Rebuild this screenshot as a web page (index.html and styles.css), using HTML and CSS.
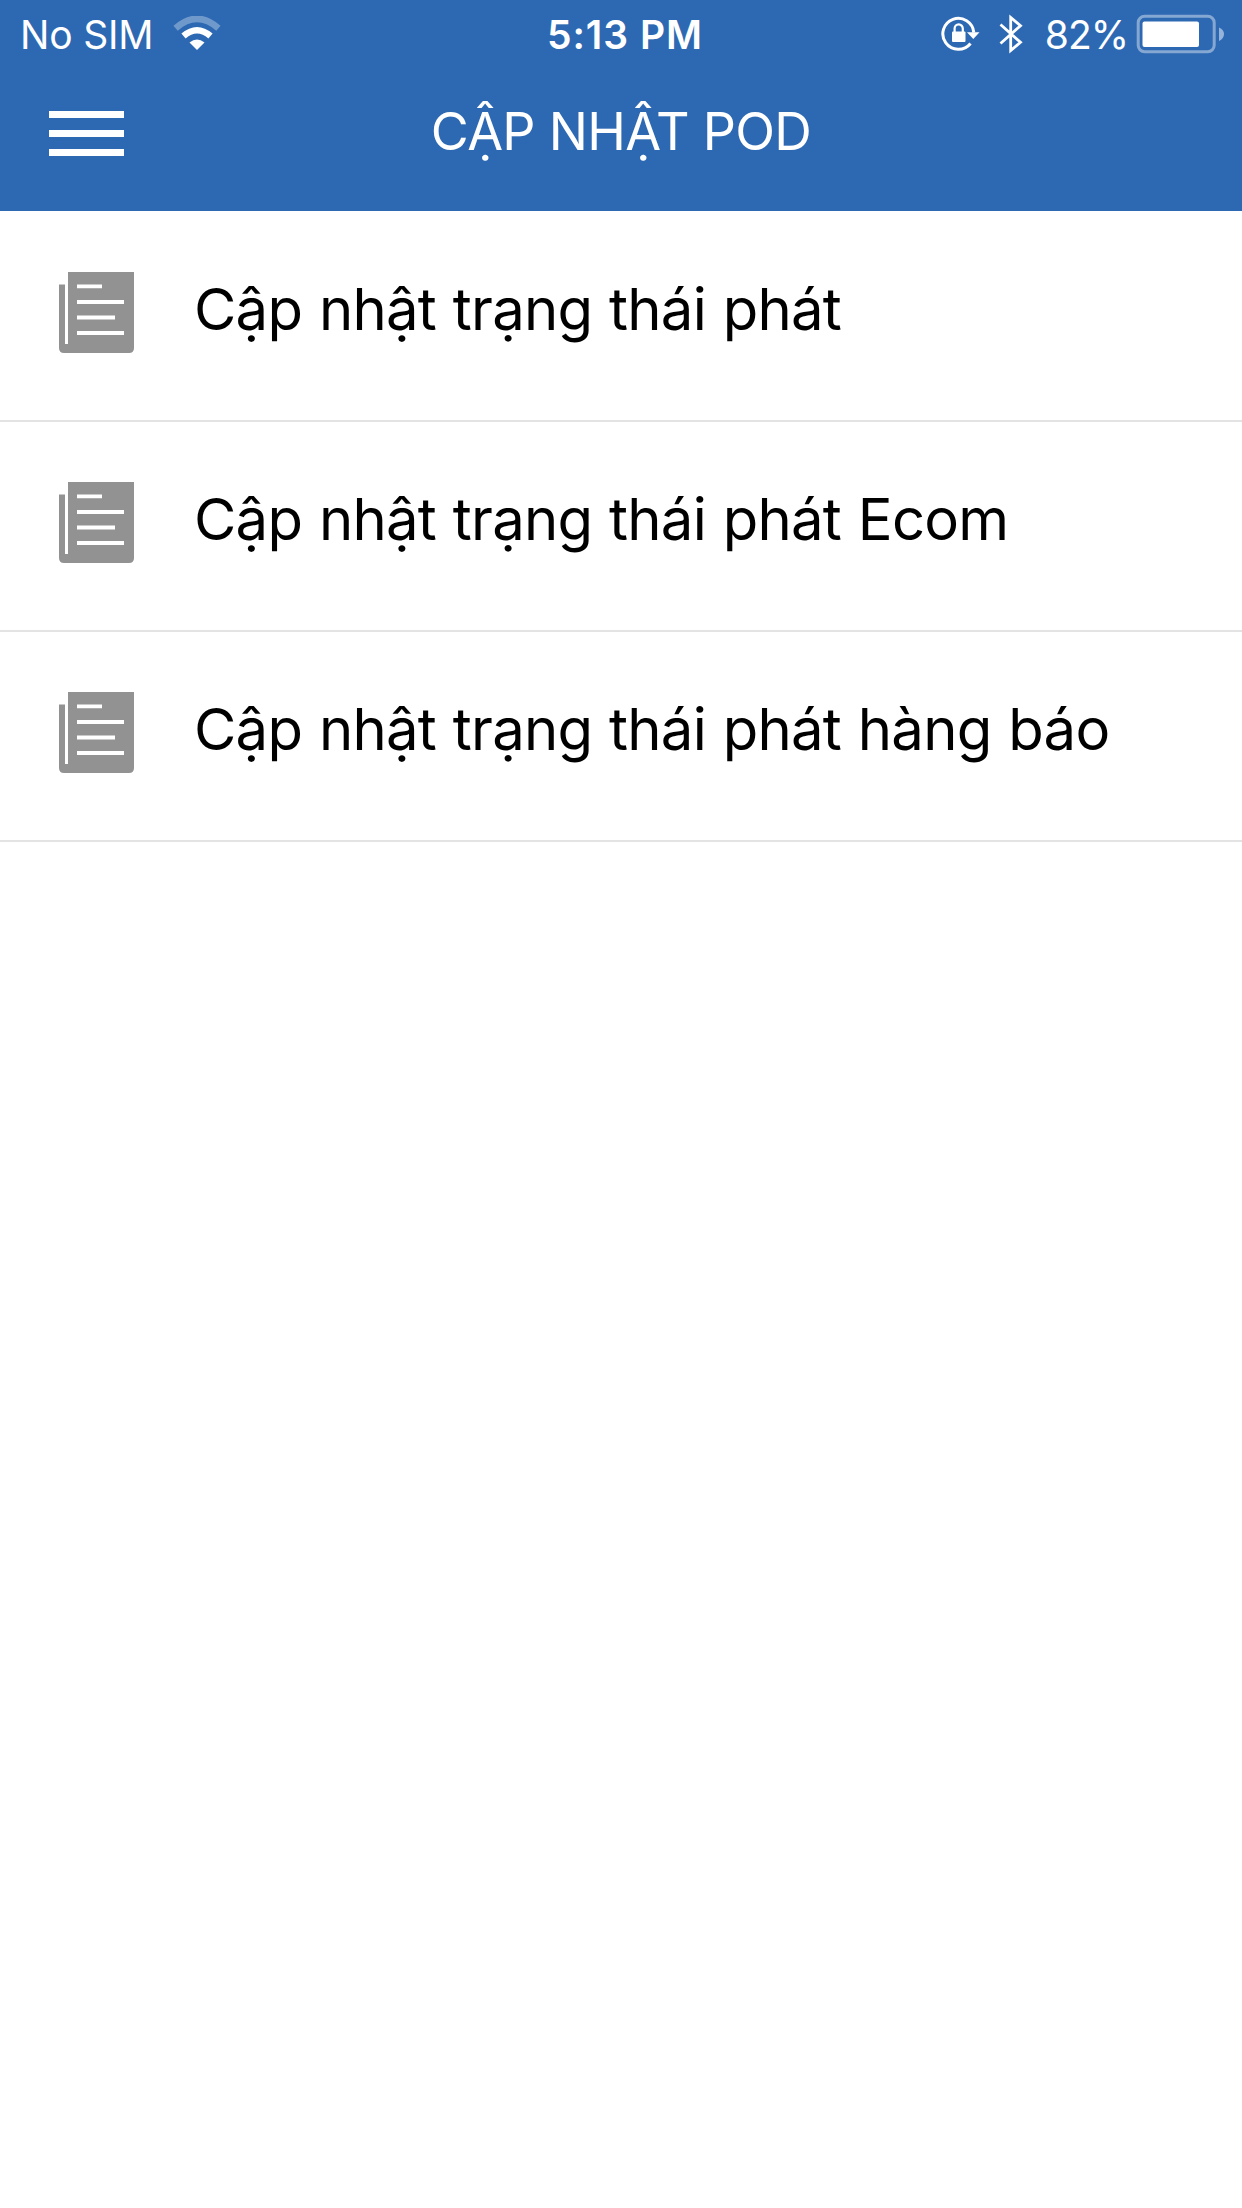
FILE: index.html
```html
<!DOCTYPE html>
<html lang="vi">
<head>
    <meta charset="UTF-8">
    <meta name="viewport" content="width=device-width, initial-scale=1.0">
    <title>Cập nhật POD</title>
    <link rel="stylesheet" href="styles.css">
</head>
<body>
    <svg class="defs" width="0" height="0">
        <symbol id="doc" viewBox="0 0 75 81">
            <path fill="#929292" d="M0 12.5H6V72H9V0H75V76Q75 81 70 81H5Q0 81 0 76Z"/>
            <path fill="none" stroke="#fff" stroke-width="3.8" d="M18 14.3H43M18 30H65M18 45.5H56M18 61H65"/>
        </symbol>
    </svg>

    <header class="header">
        <div class="status">
            <div class="status-left">
                <span class="carrier">No SIM</span>
                <svg class="wifi" width="48" height="36" viewBox="0 0 48 36" fill="none">
                    <path d="M2.6 12.2Q24 -6.5 45.4 12.2" stroke="#fff" stroke-opacity=".32" stroke-width="6.5"/>
                    <path d="M10.5 20Q24 8.5 37.5 20" stroke="#fff" stroke-width="6.5"/>
                    <path d="M16.5 26.5Q24 20.5 31.5 26.5L24 34Z" fill="#fff"/>
                </svg>
            </div>
            <div class="time">5:13 PM</div>
            <div class="status-right">
                <svg class="lock" width="40" height="36" viewBox="0 0 40 36" fill="none">
                    <path d="M29.5 27.5A15.5 15.5 0 1 1 32.8 16.5" stroke="#fff" stroke-width="3"/>
                    <path d="M26 16.2H38.5L32.3 23Z" fill="#fff"/>
                    <rect x="11" y="15.5" width="13.5" height="10.5" rx="1" fill="#fff"/>
                    <path d="M13.6 16V12.5a4.1 4.1 0 0 1 8.2 0V16" stroke="#fff" stroke-width="2.2"/>
                </svg>
                <svg class="bluetooth" width="24" height="40" viewBox="0 0 24 40" fill="none">
                    <path d="M1.5 10.5L21.5 28.3L11.7 36.5V3.5L21.5 11.7L1.5 29.5" stroke="#fff" stroke-width="2.8"/>
                </svg>
                <span class="percent">82%</span>
                <svg class="battery" width="90" height="40" viewBox="0 0 90 40" fill="none">
                    <rect x="2.2" y="2.2" width="76" height="35.6" rx="6.5" stroke="#fff" stroke-opacity=".42" stroke-width="3"/>
                    <rect x="6.5" y="7.5" width="56.5" height="25.5" rx="2" fill="#fff"/>
                    <path d="M83 13.5Q88 15.5 88 20T83 27Z" fill="#fff" fill-opacity=".5"/>
                </svg>
            </div>
        </div>
        <div class="navbar">
            <div class="menu">
                <i></i>
                <i></i>
                <i></i>
            </div>
            <h1 class="title">CẬP NHẬT POD</h1>
        </div>
    </header>

    <ul class="list">
        <li class="item">
            <svg class="icon"><use href="#doc"/></svg>
            <span class="label">Cập nhật trạng thái phát</span>
        </li>
        <li class="item">
            <svg class="icon"><use href="#doc"/></svg>
            <span class="label">Cập nhật trạng thái phát Ecom</span>
        </li>
        <li class="item">
            <svg class="icon"><use href="#doc"/></svg>
            <span class="label">Cập nhật trạng thái phát hàng báo</span>
        </li>
    </ul>
</body>
</html>
```
FILE: styles.css
```css
*{
    margin: 0;
    padding: 0;
    box-sizing: border-box;
}
body{
    width: 1242px;
    min-height: 2208px;
    background: #fff;
    font-family: Inter, "Liberation Sans", sans-serif;
    color: #000;
}
svg{
    display: block;
    flex: none;
}
.defs{
    position: absolute;
}

/* header */
.header{
    height: 211px;
    background: #2d69b3;
    color: #fff;
}
.status{
    display: grid;
    grid-template-columns: 1fr auto 1fr;
    align-items: center;
    height: 70px;
    padding: 0 16px 0 20px;
    font-size: 39px;
    line-height: 70px;
}
.status svg{
    margin-bottom: 2px;
}
.status-left,
.status-right{
    display: flex;
    align-items: center;
}
.status-right{
    justify-content: flex-end;
}
.carrier{
    letter-spacing: -0.2px;
}
.wifi{
    margin-left: 20px;
}
.time{
    padding-left: 4px;
    font-weight: 600;
    letter-spacing: 1px;
}
.bluetooth{
    margin-left: 18px;
}
.percent{
    margin-left: 22px;
    letter-spacing: -1px;
}
.battery{
    margin-left: 8px;
}
.navbar{
    display: grid;
    grid-template-columns: 1fr auto 1fr;
    height: 126px;
    padding: 0 49px;
}
.menu{
    display: flex;
    flex-direction: column;
    gap: 12px;
    width: 75px;
    padding-top: 41px;
}
.menu i{
    height: 7px;
    background: #fff;
}
.title{
    font-size: 52px;
    font-weight: 400;
    line-height: 124px;
    letter-spacing: -0.7px;
}

/* list */
.list{
    padding-top: 1px;
    list-style: none;
}
.item{
    display: flex;
    align-items: center;
    height: 210px;
    padding: 0 59px 8px;
    border-bottom: 2px solid #e3e3e3;
}
.icon{
    width: 75px;
    height: 81px;
}
.label{
    margin-left: 60px;
    padding-bottom: 7px;
    font-size: 58px;
    line-height: 80px;
    letter-spacing: -0.75px;
    word-spacing: 1.2px;
    white-space: nowrap;
}
```
